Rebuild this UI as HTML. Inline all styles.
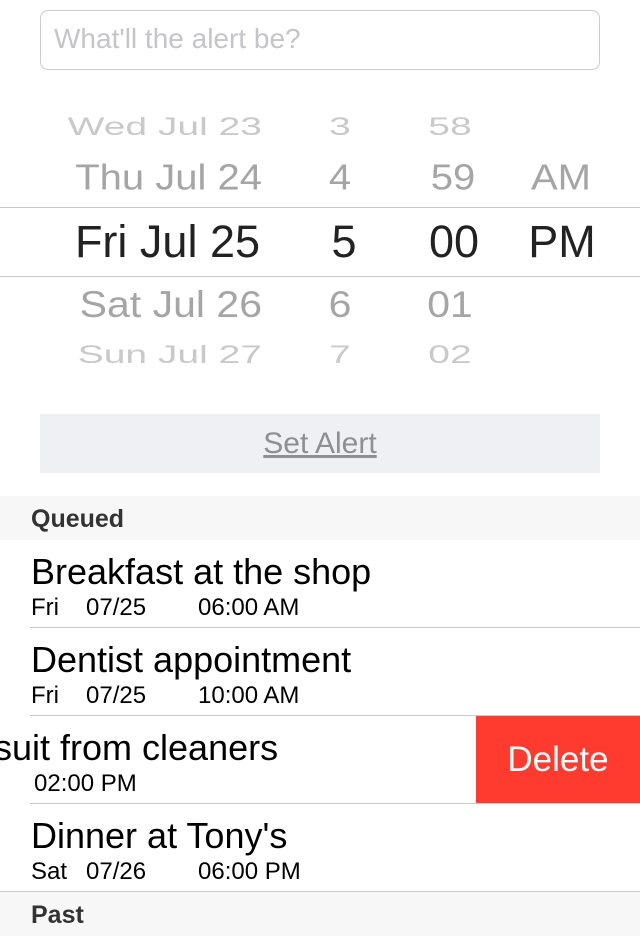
<!DOCTYPE html>
<html><head><style>
body{margin:0;width:640px;height:920px;overflow:hidden;background:#fff;font-family:"Liberation Sans",Arial,sans-serif;position:relative}
.a{position:absolute;white-space:nowrap}
.inp{left:40px;top:10px;width:558px;height:58px;border:1px solid #ccc;border-radius:8px;}
.ph{left:54px;top:23px;font-size:28px;color:#c4c4c9}
.r{position:absolute;left:0;width:640px;height:0}
.c{position:absolute;transform:translate(-50%,-50%);white-space:nowrap}
.d{position:absolute;transform:translate(-100%,-50%);white-space:nowrap}
.line{position:absolute;left:0;width:640px;height:1px;background:#c8c8c8}
.btn{left:40px;top:414px;width:560px;height:59px;background:#eff0f4;text-align:center;line-height:59px;font-size:30px;color:#8e8e93;text-decoration:underline}
.hdr{left:0;width:640px;height:44px;background:#f7f7f7;font-size:25px;font-weight:bold;color:#333}
.row{left:0;width:640px;height:88px}
.t{position:absolute;left:31px;top:11px;font-size:36px;color:#000;white-space:nowrap}
.s{position:absolute;top:54px;font-size:24px;color:#000;white-space:nowrap}
.sep{position:absolute;left:30px;right:0;bottom:0;height:1px;background:#c8c8c8}
</style></head><body>
<div class="a inp"></div>
<div class="a ph">What'll the alert be?</div>

<div class="r" style="top:127px;color:#c9c9c9;font-size:39px">
 <div class="d" style="left:262px;transform:translate(-100%,-50%) scaleY(.65)">Wed Jul 23</div>
 <div class="c" style="left:340px;transform:translate(-50%,-50%) scaleY(.65)">3</div>
 <div class="c" style="left:450px;transform:translate(-50%,-50%) scaleY(.65)">58</div>
</div>
<div class="r" style="top:178px;color:#a5a5a5;font-size:40px">
 <div class="d" style="left:262px;transform:translate(-100%,-50%) scaleY(.9)">Thu Jul 24</div>
 <div class="c" style="left:340px;transform:translate(-50%,-50%) scaleY(.9)">4</div>
 <div class="c" style="left:453px;transform:translate(-50%,-50%) scaleY(.9)">59</div>
 <div class="c" style="left:561px;transform:translate(-50%,-50%) scaleY(.9)">AM</div>
</div>
<div class="line" style="top:207px"></div>
<div class="r" style="top:242px;color:#222;font-size:45px">
 <div class="d" style="left:260px">Fri Jul 25</div>
 <div class="c" style="left:344px">5</div>
 <div class="c" style="left:454px">00</div>
 <div class="c" style="left:562px">PM</div>
</div>
<div class="line" style="top:276px"></div>
<div class="r" style="top:305px;color:#a5a5a5;font-size:41px">
 <div class="d" style="left:262px;transform:translate(-100%,-50%) scaleY(.9)">Sat Jul 26</div>
 <div class="c" style="left:340px;transform:translate(-50%,-50%) scaleY(.9)">6</div>
 <div class="c" style="left:450px;transform:translate(-50%,-50%) scaleY(.9)">01</div>
</div>
<div class="r" style="top:355px;color:#c9c9c9;font-size:39px">
 <div class="d" style="left:262px;transform:translate(-100%,-50%) scaleY(.65)">Sun Jul 27</div>
 <div class="c" style="left:340px;transform:translate(-50%,-50%) scaleY(.65)">7</div>
 <div class="c" style="left:450px;transform:translate(-50%,-50%) scaleY(.65)">02</div>
</div>

<div class="a btn">Set Alert</div>

<div class="a hdr" style="top:496px"><span style="position:absolute;left:31px;top:9px">Queued</span></div>

<div class="a row" style="top:540px">
 <div class="t">Breakfast at the shop</div>
 <div class="s" style="left:31px">Fri</div><div class="s" style="left:86px">07/25</div><div class="s" style="left:198px">06:00 AM</div>
 <div class="sep"></div>
</div>
<div class="a row" style="top:628px">
 <div class="t">Dentist appointment</div>
 <div class="s" style="left:31px">Fri</div><div class="s" style="left:86px">07/25</div><div class="s" style="left:198px">10:00 AM</div>
 <div class="sep"></div>
</div>
<div class="a row" style="top:716px;overflow:hidden">
 <div class="t" style="left:-6px">suit from cleaners</div>
 <div class="s" style="left:34px">02:00 PM</div>
 <div class="sep"></div>
 <div style="position:absolute;left:476px;top:0;width:164px;height:87px;background:#ff3b30;color:#fff;font-size:35px;text-align:center;line-height:87px">Delete</div>
</div>
<div class="a row" style="top:804px">
 <div class="t">Dinner at Tony's</div>
 <div class="s" style="left:31px">Sat</div><div class="s" style="left:86px">07/26</div><div class="s" style="left:198px">06:00 PM</div>
 <div class="sep" style="left:0"></div>
</div>
<div class="a hdr" style="top:892px"><span style="position:absolute;left:31px;top:9px">Past</span></div>
</body></html>
